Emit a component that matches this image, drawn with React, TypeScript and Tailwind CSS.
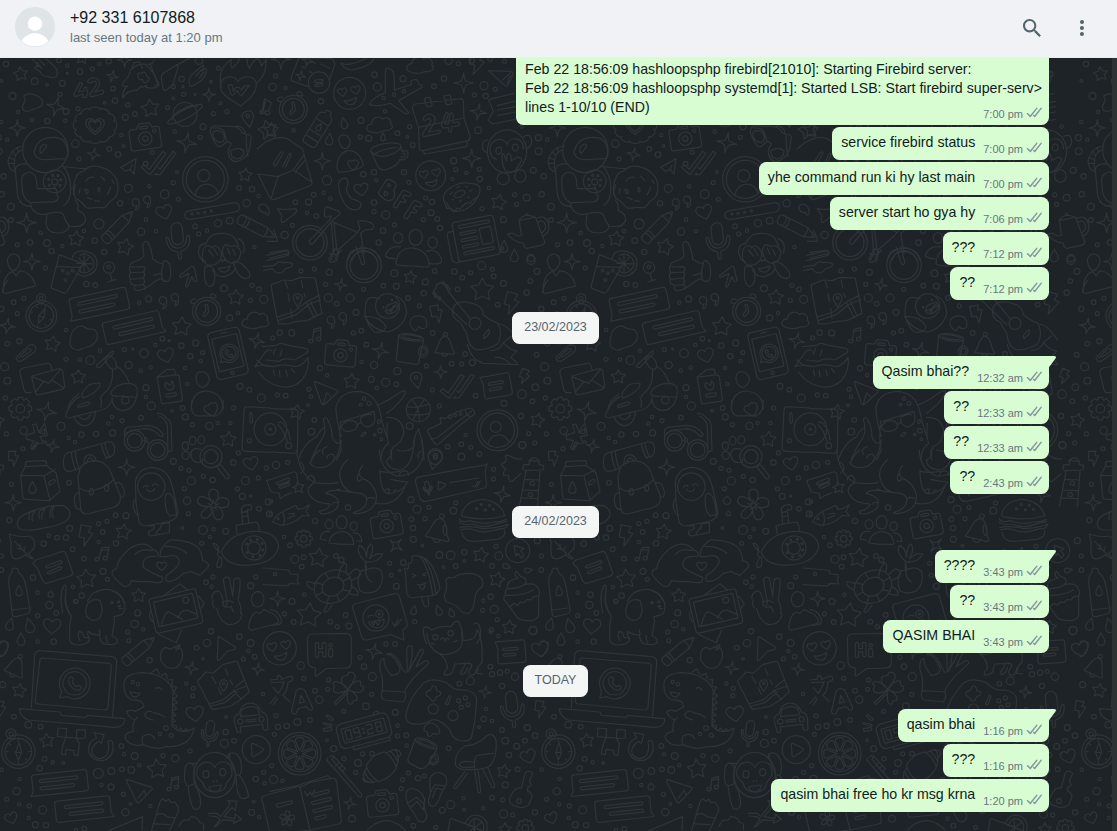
import type { ReactNode } from "react";

/* ---------- Doodle drawing helpers ---------- */

function smooth(points: string, closed: boolean): string {
  const n = points.trim().split(/[\s,]+/).map(Number);
  const pts: [number, number][] = [];
  for (let i = 0; i + 1 < n.length; i += 2) pts.push([n[i], n[i + 1]]);
  const len = pts.length;
  const at = (i: number) => (closed ? pts[(i + len) % len] : pts[Math.max(0, Math.min(len - 1, i))]);
  let d = `M${pts[0][0]} ${pts[0][1]}`;
  const count = closed ? len : len - 1;
  for (let i = 0; i < count; i++) {
    const a = at(i - 1);
    const b = at(i);
    const c = at(i + 1);
    const e = at(i + 2);
    const x1 = b[0] + (c[0] - a[0]) / 6;
    const y1 = b[1] + (c[1] - a[1]) / 6;
    const x2 = c[0] - (e[0] - b[0]) / 6;
    const y2 = c[1] - (e[1] - b[1]) / 6;
    d += `C${x1.toFixed(1)} ${y1.toFixed(1)} ${x2.toFixed(1)} ${y2.toFixed(1)} ${c[0]} ${c[1]}`;
  }
  return closed ? d + "Z" : d;
}

const L = ({ d }: { d: string }) => <path d={d} />;
const Blob = ({ p }: { p: string }) => <L d={smooth(p, true)} />;
const Curve = ({ p }: { p: string }) => <L d={smooth(p, false)} />;
const O = ({ c }: { c: string }) => {
  const [x, y, r, ry] = c.split(" ").map(Number);
  return <ellipse cx={x} cy={y} rx={r} ry={ry || r} />;
};
const Box = ({ b, r = 4 }: { b: string; r?: number }) => {
  const [x, y, w, h] = b.split(" ").map(Number);
  return <rect x={x} y={y} width={w} height={h} rx={r} />;
};

const At = ({ x, y, s = 1, r = 0, children }: { x: number; y: number; s?: number; r?: number; children: ReactNode }) => (
  <g transform={`translate(${x} ${y}) rotate(${r}) scale(${s})`}>{children}</g>
);

const Dots = ({ list }: { list: string }) => (
  <>
    {list.split(",").map((t, i) => (
      <O key={i} c={t.trim()} />
    ))}
  </>
);

function starPath(x: number, y: number, r: number, rot: number) {
  let d = "";
  for (let i = 0; i < 10; i++) {
    const a = ((rot - 90 + i * 36) * Math.PI) / 180;
    const q = i % 2 ? r * 0.52 : r;
    d += `${i ? "L" : "M"}${(x + q * Math.cos(a)).toFixed(1)} ${(y + q * Math.sin(a)).toFixed(1)}`;
  }
  return d + "Z";
}
const Stars = ({ list }: { list: string }) => (
  <>
    {list.split(",").map((t, i) => {
      const [x, y, r, rot] = t.trim().split(" ").map(Number);
      return <L key={i} d={starPath(x, y, r, rot || 0)} />;
    })}
  </>
);

/* Each entry is "x y radius rotation"; `unit` is the radius at which `d` is drawn. */
const Stamp = ({ list, d, unit }: { list: string; d: string; unit: number }) => (
  <>
    {list.split(",").map((t, i) => {
      const [x, y, r, rot] = t.trim().split(" ").map(Number);
      return (
        <At key={i} x={x} y={y} s={r / unit} r={rot || 0}>
          <L d={d} />
        </At>
      );
    })}
  </>
);
const Sparks = ({ list }: { list: string }) => (
  <Stamp
    list={list}
    unit={30}
    d="M0 -30Q3 -7 7 -6Q14 -3 30 0Q12 3 7 7Q3 12 0 30Q-3 12 -7 7Q-12 3 -30 0Q-12 -3 -7 -7Q-3 -12 0 -30Z"
  />
);
const Hearts = ({ list }: { list: string }) => (
  <Stamp list={list} unit={26} d="M0 24C-16 12 -27 2 -26 -9C-24 -24 -6 -24 0 -12C6 -24 24 -24 26 -9C27 2 16 12 0 24Z" />
);
const Bolts = ({ list }: { list: string }) => (
  <Stamp list={list} unit={30} d="M-14 -28L14 -24L7 -8L20 -5L-4 32L-3 8L-18 6Z" />
);
const Drops = ({ list }: { list: string }) => (
  <Stamp list={list} unit={18} d="M0 -19C5 -8 12 0 11 8C9 20 -9 20 -11 8C-12 0 -5 -8 0 -19Z" />
);

/* ---------- Recurring doodles ---------- */

const Camera = () => (
  <>
    <L d="M-38 -26L-21 -26L-16 -37Q-14 -40 -10 -40L14 -40Q18 -40 20 -36L24 -26L38 -26Q46 -26 46 -18L46 30Q46 38 38 38L-38 38Q-46 38 -46 30L-46 -18Q-46 -26 -38 -26Z" />
    <O c="0 6 20" />
    <O c="0 6 8" />
    <O c="30 -14 5" />
    <Box b="-12 -31 24 7" r={3} />
  </>
);
const Contact = () => (
  <>
    <O c="0 0 68" />
    <O c="0 0 57" />
    <O c="-5 -11 18" />
    <L d="M-31 47C-24 5 28 5 39 41" />
  </>
);
const Mic = () => (
  <>
    <Box b="-17 -56 34 66" r={17} />
    <L d="M-35 -14Q-27 -18 -26 -6Q-22 20 0 20Q24 18 27 -8Q30 -18 36 -12Q38 24 5 31L5 50Q1 58 -4 50L-4 31Q-34 26 -35 -14Z" />
  </>
);
const Pencil = () => (
  <>
    <L d="M-56 -15L28 -15L58 -2Q62 0 58 2L28 15L-56 15Q-64 15 -64 0Q-64 -15 -56 -15Z" />
    <L d="M28 -15Q34 0 28 15M-44 -15Q-36 0 -44 15M-34 -15Q-26 0 -34 15M50 -6L50 6" />
  </>
);
const Pin = () => (
  <>
    <L d="M0 26C-12 8 -18 0 -17 -9C-14 -28 14 -28 17 -9C18 0 10 10 0 26Z" />
    <O c="0 -8 5" />
  </>
);
const Chat = ({ flip }: { flip?: boolean }) => (
  <g transform={flip ? "scale(-1 1)" : undefined}>
    <L d="M-72 -32L78 -32Q86 -32 86 -24L86 24Q86 32 78 32L-82 32Q-92 32 -84 26L-80 17L-80 -24Q-80 -32 -72 -32Z" />
    <Box b="-58 -16 116 9" r={4.5} />
    <Box b="-58 6 104 9" r={4.5} />
  </g>
);
const Note = () => (
  <>
    <L d="M-42 -32L36 -32Q42 -32 42 -26L42 24Q42 32 34 32L-32 32Q-38 32 -38 24L-36 -12Z" />
    <Box b="-22 -12 44 7" r={3.5} />
    <Box b="-22 4 36 7" r={3.5} />
  </>
);
const Ticks = () => (
  <L d="M-52 6L-44 -2L-28 12L12 -42L22 -36L-26 28Z M-6 24L-12 28L4 28L52 -36L43 -42L4 12L-2 6" />
);
const Compass = () => (
  <>
    <O c="0 0 50" />
    <O c="0 0 40" />
    <O c="-22 -53 15" />
    <O c="-22 -53 6" />
    <L d="M2 -27L10 2L0 25L-8 2ZM-8 2L10 2M0 -36L0 -31M36 0L31 0M0 36L0 31M-36 0L-31 0M-27 -24L-23 -21M25 24L22 21" />
  </>
);
const Cloud = () => (
  <L d="M-34 20C-50 14 -40 -4 -26 -3C-26 -22 0 -30 10 -16C22 -26 40 -12 33 1C48 12 30 24 14 20C0 28 -20 28 -34 20Z" />
);
const Quotes = () => (
  <>
    <L d="M-10 -4C-8 -22 -32 -24 -32 -8C-32 4 -20 6 -17 2C-18 9 -24 14 -21 18C-14 18 -9 6 -10 -4Z" />
    <L d="M26 -12C28 -30 4 -32 4 -16C4 -4 16 -2 19 -6C18 1 12 6 15 10C22 10 27 -2 26 -12Z" />
  </>
);
const Music = () => (
  <>
    <L d="M-8 16L-4 -22L20 -28L18 8M-4 -14L19 -20" />
    <O c="-14 17 7 6" />
    <O c="12 10 7 6" />
  </>
);
const Flower = () => (
  <>
    <L d="M0 -8C-20 -24 -14 -46 0 -46C16 -46 18 -24 6 -8C18 -30 42 -22 44 -10C46 8 24 10 8 2C28 8 34 32 20 40C4 46 -4 26 -1 8C-4 28 -20 44 -32 34C-42 22 -24 8 -8 2C-28 8 -50 -4 -44 -18C-36 -34 -14 -20 0 -8Z" />
    <O c="0 0 7" />
    <L d="M0 -8L0 -16M8 -2L15 -5M5 6L9 12M-5 6L-9 12M-8 -2L-15 -5" />
  </>
);
const Bell = () => (
  <>
    <L d="M-30 22C-20 12 -22 -24 -4 -28C18 -32 18 10 32 20Q32 26 26 26L-26 26Q-32 26 -30 22Z" />
    <O c="-1 -35 6" />
    <L d="M-10 26Q-6 36 4 34Q9 32 10 26" />
  </>
);
const Gear = () => (
  <>
    <L d="M-6 -34L6 -34L9 -25L18 -30L28 -20L23 -10L34 -6L34 6L24 9L28 20L20 28L10 23L6 34L-6 34L-9 24L-20 28L-28 20L-23 9L-34 6L-34 -6L-24 -10L-28 -20L-18 -30L-9 -25Z" />
    <O c="0 0 13" />
  </>
);
const People = () => (
  <>
    <O c="0 -44 16 20" />
    <O c="-38 -38 12 14" />
    <O c="36 -32 11 13" />
    <L d="M-38 18C-34 -28 38 -28 36 22Q0 24 -38 18ZM-46 10L-64 6C-62 -14 -50 -20 -36 -16M46 12L60 14C60 -6 48 -14 34 -12" />
  </>
);
const Plane = () => <L d="M-36 -28L36 -10Q42 -6 34 0L4 36Q-2 38 -6 30L-36 -22ZM0 24L16 0L22 12" />;
const Alarm = () => (
  <>
    <O c="0 0 42" />
    <O c="0 0 33" />
    <L d="M-5 -20Q0 -24 3 -18L6 2L-6 16Q-12 16 -10 8L-2 -2ZM-36 -24C-56 -20 -48 -42 -32 -36M12 -42C4 -56 30 -56 28 -40Z" />
  </>
);
const Arrow = () => <L d="M-4 32L2 -8L-20 6Q-28 8 -24 0L6 -28Q12 -34 16 -26L28 10Q26 18 18 12L12 0L2 32Q-1 36 -4 32Z" />;
const WhatsLogo = () => (
  <>
    <L d="M-40 44L-34 24A46 46 0 1 1 -18 40Z" />
    <O c="5 0 35" />
    <L d="M-10 -18Q-2 -22 2 -12L-2 -4Q4 8 12 10L18 6Q28 10 22 18C8 30 -22 0 -10 -18Z" />
  </>
);
const Citrus = () => (
  <>
    <O c="0 0 64" />
    <O c="0 0 54" />
    {[0, 45, 90, 135, 180, 225, 270, 315].map((a) => (
      <g key={a} transform={`rotate(${a})`}>
        <L d="M0 -9L-13 -38Q-14 -48 0 -48Q14 -48 13 -38Z" />
      </g>
    ))}
  </>
);
const LoveFace = () => (
  <>
    <O c="0 0 48" />
    <Hearts list="-22 -4 14 -10,18 -10 14 -10" />
    <L d="M-16 22Q4 24 20 12Q20 34 4 34Q-10 34 -16 22Z" />
  </>
);
const Monkey = () => (
  <>
    <O c="0 0 62 68" />
    <L d="M0 -22C-12 -52 -56 -38 -54 -4C-54 8 -38 20 -34 26C-30 60 34 60 34 26C40 16 54 8 52 -8C52 -44 12 -50 0 -22Z" />
    <O c="-26 -2 9 11" />
    <O c="24 -8 9 11" />
    <L d="M-18 36Q4 32 20 30Q18 50 0 50Q-12 50 -18 36ZM-5 18L-3 20M6 16L5 20" />
  </>
);

/* ---------- Wallpaper sections ---------- */

const SectionA = () => (
  <g transform="scale(.33333)">
    <Dots list="18 192 8,177 181 7,202 197 5,202 220 3,240 215 8,277 207 6,298 192 5,326 184 8,104 244 10,187 250 9,141 254 4,4 243 4,180 283 6,38 288 10,339 266 7,314 308 4,345 302 8,54 336 5,198 334 9,234 326 6,383 315 6,96 360 5,142 363 8,196 362 5,405 342 7,376 352 9,503 323 6,597 182 11,545 237 8,520 260 6,549 260 3,585 283 3,551 283 6,520 295 4,633 245 4,655 205 6,661 310 4,681 335 6,640 341 6,609 380 9,524 395 5,601 412 6,22 419 5,226 431 11,364 405 5,371 438 4,328 447 7,354 464 8,237 477 6,457 457 6,437 491 7,531 516 4,520 548 6,448 559 5,385 565 12,494 583 13,535 598 6,11 529 8,5 583 8,4 366 5,717 564 7,756 568 8,776 588 5" />
    <Stars list="62 222 22 -8,246 173 20 5,451 325 28 -8,803 390 30 -14,736 525 21 6" />
    <Sparks list="168 320 30 14,337 228 18 14,374 180 22,627 284 20,560 428 30 10,281 463 20 12,52 384 25" />
    <Blob p="68 318 76 300 72 288 92 282 112 288 126 300 124 318 100 328 84 334 70 330" />
    <L d="M98 178L116 200Q100 196 106 206L122 216Q124 228 144 230Q168 238 172 224Q174 210 162 198L138 176M118 178L134 196M110 186L126 206" />
    <L d="M222 282L240 248L248 250L236 276L250 273L253 262L261 262L260 271L264 278L258 292L248 292L249 282L226 290ZM262 246Q268 232 284 234Q302 238 298 256Q292 270 284 276L308 270Q314 274 308 282L276 290Q266 290 272 280L288 256Q292 242 282 244Q274 244 270 250Z" />
    <L d="M368 294Q368 270 382 258Q362 262 370 248Q388 230 392 210Q410 192 432 192Q464 210 474 258Q464 268 438 262L440 256L426 262Q424 254 414 268Q402 274 396 272Q380 276 368 294ZM396 204L402 188L418 186L428 206M438 192Q456 196 462 182M414 230Q410 216 424 220Q438 210 440 228Q456 236 440 246Q430 252 428 238Q418 244 414 230ZM466 256L478 254L462 222L452 196M484 236Q484 222 492 218L530 194L534 202L518 256L496 272Q488 270 488 258ZM530 196L572 172" />
    <L d="M568 252Q564 232 582 218L608 196Q614 196 610 204L602 214L616 206Q622 208 618 218Q616 232 600 244L578 258Q570 262 568 252ZM588 228L602 212M598 234L612 216" />
    <L d="M664 262Q650 208 694 178Q690 196 696 204Q716 190 718 174M722 318C690 298 654 280 662 250C672 222 708 228 714 246C722 228 760 222 768 248C774 278 744 300 722 318ZM770 250Q792 230 796 206L799 178L784 198Q782 184 774 176Q762 176 748 206Q742 194 740 176M684 256L692 280Q698 292 704 280L712 272L718 282Q724 292 730 280L748 256L734 258L724 270L718 262L708 262L700 274L696 254Z" />
    <g transform="translate(285 376)">
      {[0, 30, 60, 90, 120, 150, 180, 210, 240, 270, 300, 330].map((a) => (
        <g key={a} transform={`scale(1.2 1) rotate(${a})`}>
          <L d="M-13 -47C-12 -57 12 -57 13 -47" />
        </g>
      ))}
      <Hearts list="0 2 28,0 2 19" />
    </g>
    <At x={435} y={410} r={-8}><Camera /></At>
    <At x={555} y={343}><O c="0 0 36" /><g transform="rotate(-28)"><O c="0 0 58 13" /><Curve p="-42 -4 -30 -14 0 -17 30 -14 44 -2" /></g></At>
    <L d="M636 382Q626 392 636 410Q650 444 662 440L682 424Q692 428 694 432L686 446Q682 458 690 474Q704 492 722 480Q744 470 750 440L754 412Q750 398 738 406L740 444L744 470M636 382Q640 374 654 378L702 380Q722 384 726 398L736 402Q732 378 708 378M640 384Q670 382 674 400L680 420M640 396Q650 388 666 396Q678 410 670 424Q656 432 644 418Q636 406 640 396ZM692 452Q704 444 720 446L732 452Q732 470 716 476Q700 478 694 466Z" />
    <L d="M784 342L794 296L814 308L806 332M796 304L790 330" />
    <O c="786 336 6 5" /><O c="802 338 7 6" />
    <At x={745} y={356} r={-10}><Pin /></At>
    <O c="136 450 68" />
    <L d="M203 468Q206 414 164 412Q110 410 102 458Q108 484 150 478L194 476Q202 474 203 462M120 456Q116 440 134 432Q144 434 136 444Q130 454 124 460Z" />
    <L d="M72 438Q32 442 24 486Q26 510 46 516L42 496M64 450Q40 462 44 494M50 442L56 456M36 454L46 466M26 472L40 478M26 490L42 490" />
    <L d="M82 492Q48 490 46 508L52 580Q58 618 90 618M66 552Q60 520 88 516Q110 520 110 550L112 566Q142 566 154 566Q176 564 168 580Q184 598 160 606L92 608Q64 596 66 552ZM190 500L230 504Q256 508 266 504M186 496Q212 520 212 566Q214 598 192 616" />
    <O c="164 544 34" /><O c="164 546 9" />
    <Dots list="158 526 3,174 527 3,146 538 3,182 540 3,148 556 3,180 556 3,164 564 3" />
    <Blob p="222 550 234 522 252 512 270 500 296 500 320 508 336 520 350 540 354 566 346 592 330 604 314 622 290 622 262 624 244 606 226 592 220 570" />
    <L d="M226 554L220 584M258 544Q266 528 282 532M302 530Q310 534 314 542M254 568Q266 564 264 580Q258 584 254 568ZM294 566Q296 558 300 568Q300 580 294 574ZM322 584Q326 578 332 562M284 602L298 604M262 592L276 598M240 566L238 580M336 540L342 550" />
    <At x={476} y={496}><Ticks /></At>
    <L d="M362 502L408 476L402 522L390 508L376 514ZM390 508L396 496" />
    <At x={616} y={538}><Contact /></At>
  </g>
);

const SectionB = () => (
  <g transform="translate(0 200) scale(.33333)">
    <Dots list="33 20 10,33 60 7,122 99 5,52 134 6,90 128 8,141 129 10,155 153 8,187 138 5,252 93 5,297 72 15,284 122 8,313 156 8,136 204 6,259 252 8,286 255 7,41 307 7,72 295 6,4 327 8,52 341 6,22 431 7,58 424 8,198 390 5,418 308 5,446 297 9,438 59 5,423 95 11,468 94 5,585 79 7,596 102 6,621 92 5,654 70 11,689 62 10,740 10 11,763 141 5,756 256 6,777 268 7,672 265 10,751 301 6,791 298 12,689 354 9,714 340 5,487 416 7,508 422 3,466 435 5,544 437 8,587 429 9,571 469 8,608 458 6,602 483 5,432 460 13,373 449 6,398 447 3,300 452 5,271 481 13,240 479 5,198 478 6,14 500 12,386 495 11,452 503 5,422 512 5,555 504 5,562 552 5,438 563 9,438 591 5,720 559 9,748 569 7,784 594 12,22 542 10,16 594 6,360 10 8" />
    <Stars list="228 117 24 6,375 141 26 14,707 292 24 4,545 380 30 4,157 432 24 10,235 531 22" />
    <Sparks list="80 68 30,22 378 24 8,770 422 24 14" />
    <Hearts list="493 36 24 -16,498 466 24 -16" />
    <L d="M92 10Q92 38 126 44Q142 42 158 38Q188 34 192 48Q196 66 206 74Q210 98 172 99Q140 98 138 70L140 46M206 78Q250 86 257 60Q256 38 234 32Q236 10 226 0M62 6Q72 20 92 20" />
    <At x={356} y={78} r={-46} s={1}><Pencil /></At>
    <At x={427} y={14} s={0.95}><Quotes /></At>
    <L d="M570 32L704 8Q718 8 718 22Q718 34 706 36L572 58Q554 58 554 46Q554 34 570 32Z" />
    <Dots list="576 42 3,594 40 3,614 37 3,634 33 3" />
    <At x={534} y={124} r={-6}><Mic /></At>
    <At x={772} y={84} r={27}><Pencil /></At>
    <L d="M776 22Q780 8 796 14Q812 24 806 44Q794 48 798 38Q778 38 776 22Z" />
    <At x={664} y={166}>
      <Curve p="-48 -34 -28 -60 4 -66 36 -56 52 -28" />
      <L d="M-48 -36Q-70 -34 -68 -6Q-60 20 -48 18M50 -50Q76 -40 66 -6M-56 10Q-60 -22 -44 -28Q-34 -32 -28 -22Q-20 -34 -10 -24L0 -10Q4 18 -20 28Q-48 36 -56 10ZM4 -8Q2 -26 14 -32Q28 -26 34 -28Q50 -32 58 -12Q58 20 32 24Q8 20 4 -8ZM-48 34Q-24 28 -20 50Q-16 92 -36 94Q-54 86 -50 40ZM36 20Q56 12 82 48Q92 68 74 70Q48 68 36 20M-8 38Q6 40 26 32Q22 52 8 50Q-6 50 -8 38ZM-28 44Q-14 66 8 64Q34 58 40 42M-38 -16L-24 2M-22 -20L-10 0M18 -22L26 -2M34 -18L42 0" />
      <Dots list="2 16 2,10 14 2" />
    </At>
    <Sparks list="96 185 25" />
    <L d="M22 180Q26 162 42 162Q60 164 60 186Q54 206 42 212Q24 208 22 180ZM10 276Q8 224 38 214L48 228L60 212Q94 216 106 254Q106 260 98 260L18 280Q12 280 10 276ZM178 164L250 192L200 276Q196 282 188 278L158 266Q152 264 154 256ZM172 200L242 202" />
    <Dots list="188 212 4,204 220 4,218 212 4,196 240 4" />
    <Curve p="216 176 224 160 244 153 270 158 288 174 288 206 270 224 248 228 228 220" />
    <Curve p="240 166 256 162 278 178 280 200 264 216 246 218 236 208" />
    <L d="M252 166L252 216M230 190L280 192M236 174L268 208M268 172L238 204" />
    <O c="327 203 17" /><O c="326 201 5" /><L d="M330 220L336 242L324 246M336 242L348 238" />
    <L d="M392 218Q384 196 396 188Q426 178 432 168L428 136Q432 118 444 128Q456 150 458 178Q474 190 490 192Q488 184 496 182Q512 186 512 216Q512 242 502 244Q490 246 486 236Q466 240 458 250Q434 270 412 272Q396 268 406 256Q386 254 392 238Q384 226 392 218ZM490 192Q482 212 486 236M394 200Q404 202 430 200Q440 204 430 216L392 218M392 238L430 234Q438 224 430 216M406 256L428 254Q438 246 430 234M428 254Q440 258 434 268M460 226Q472 222 486 220" />
    <At x={564} y={228} r={6}><Arrow /></At>
    <At x={124} y={348} s={0.92} r={22}><Compass /></At>
    <At x={295} y={312} r={-12} s={1.05}><Chat /></At>
    <At x={401} y={382} r={-13} s={1.05}><Chat flip /></At>
    <Blob p="212 410 222 388 244 378 262 386 284 390 292 412 278 434 252 444 232 450 212 438" />
    <At x={510} y={308} r={-2}><Quotes /></At>
    <At x={620} y={334}><Alarm /></At>
    <At x={768} y={360} s={1}><Cloud /></At>
    <L d="M48 472L86 436Q98 430 106 440Q110 450 100 458L66 482Q50 490 48 472ZM56 474L84 446Q94 444 94 452L66 472" />
    <L d="M94 578L82 578Q74 578 72 570L60 520Q58 508 70 504L140 490Q150 488 152 496L156 508M96 528L178 506Q186 506 188 514L194 558Q194 566 186 568L118 584Q108 586 106 576L96 536ZM96 530L146 550L182 508M106 576L130 546M192 564L156 540" />
    <L d="M290 496L336 454Q342 452 340 460L300 502Q290 506 290 496ZM316 478Q320 464 336 470Q354 488 348 506Q328 514 316 478ZM338 510Q340 560 310 582L304 590M352 500Q376 514 388 550Q414 552 412 576L410 592Q382 590 366 588Q332 592 332 578Q346 550 388 550M300 550Q302 572 250 594Q236 584 268 554Q284 548 300 550ZM236 582Q206 602 204 628M300 592Q308 606 302 622M246 620Q230 626 234 616L262 606Q274 606 266 614ZM336 592Q336 626 366 632Q398 632 408 596" />
    <O c="376 601 11" />
    <At x={510} y={562} r={-8}>
      <L d="M-34 -36L-32 40Q-32 46 -26 46L24 46Q32 46 32 38L32 -26Q32 -34 24 -34L-34 -36L-2 -54L20 -52L22 -34" />
      <L d="M-10 -16C-20 -8 -10 8 0 8C14 8 16 -14 6 -18C8 -8 2 -4 -2 -10Z" />
      <Box b="-16 18 32 10" r={5} />
    </At>
    <At x={684} y={460} r={-13}>
      <Box b="-48 -72 96 144" r={12} /><Box b="-38 -52 76 100" r={2} /><O c="0 60 5" /><L d="M-8 -63L10 -63" />
      <g transform="scale(.6) rotate(10)"><WhatsLogo /></g>
    </At>
    <Blob p="588 538 592 520 608 515 624 526 628 542 614 560 598 558" />
    <L d="M574 628Q574 576 620 573Q668 578 670 628" />
    <L d="M765 500L796 456Q804 446 816 452M765 500Q788 492 808 498" />
  </g>
);

const SectionC = () => (
  <g transform="translate(0 400) scale(.33333)">
    <Dots list="454 18 12,183 79 12,71 92 11,19 102 6,206 114 5,225 126 5,244 104 8,288 102 8,338 99 9,325 71 5,336 51 5,366 62 6,423 53 7,516 32 4,548 24 7,556 51 9,577 74 6,628 78 11,653 69 5,691 69 5,701 24 6,69 146 6,207 248 7,34 253 6,520 184 9,543 205 6,567 211 6,574 243 12,553 266 6,561 302 11,565 341 6,547 384 4,610 229 6,638 240 8,700 188 8,715 159 6,736 242 12,775 234 6,712 267 6,727 289 9,752 288 3,777 326 7,808 342 9,799 204 6,805 306 9,28 361 8,209 385 9,146 407 5,171 413 7,198 413 8,131 431 8,218 448 7,252 476 7,296 371 6,321 364 6,347 346 7,378 347 9,308 396 7,296 426 5,348 430 8,309 514 9,322 538 6,99 533 8,113 578 5,152 584 8,219 561 5,245 587 8,227 604 6,609 390 13,641 388 5,677 394 9,630 411 5,605 430 6,618 547 7,639 531 6,635 560 5,752 557 9,767 531 6,4 468 6,4 510 7" />
    <Stars list="685 118 24 4,370 396 24 8,259 537 30 -5,416 587 22" />
    <Sparks list="140 34 30 12,158 138 20 12,380 202 25,40 308 25" />
    <Hearts list="753 190 22 -12,485 498 15" />
    <Bolts list="40 174 24 -10,257 405 32 2" />
    <At x={61} y={26}><Gear /></At>
    <L d="M78 106L104 98L98 74L108 72L116 96L134 70L142 106L120 110L128 124Q140 120 140 128L112 132L102 148Q92 150 92 142L100 122L80 118ZM118 98L134 86L134 102ZM98 144L106 126L114 128Z" />
    <L d="M200 36Q220 -4 240 -10M200 36Q190 52 206 54L286 34Q330 28 334 0M222 52Q240 86 266 74Q286 62 286 36M238 50Q256 70 272 44" />
    <L d="M76 192Q76 184 84 184L134 182Q140 182 140 188L138 196L78 200ZM76 198L62 226L68 292Q70 298 78 298L148 302L180 274L168 218L138 196M62 226L132 228L150 302M132 228L166 208M146 248Q156 236 166 240Q168 246 148 256Z" />
    <Drops list="97 263 18" />
    <L d="M206 158L322 126Q342 122 344 146Q344 166 332 170L322 172M210 214Q190 216 190 186Q190 162 206 158M210 214L242 204M214 156Q216 186 228 210M226 154Q228 184 238 206M304 132Q310 160 320 176M314 130Q320 156 330 172M238 216Q240 188 282 182Q320 184 332 216L362 290Q362 318 334 324L262 342Q242 342 242 324L234 230ZM234 258Q250 280 284 270Q326 260 342 236M252 194Q250 164 270 164Q288 168 288 184M260 190Q262 174 272 174Q280 178 280 186M236 278Q220 282 224 308Q226 330 244 328M346 250Q356 244 366 254Q378 280 370 290Q364 294 360 290" />
    <O c="274 275 6 10" /><O c="320 264 6 10" />
    <O c="404 122 31" /><O c="404 122 22" /><O c="473 150 31" /><O c="473 150 22" />
    <L d="M374 108Q370 86 382 82L440 76Q474 78 490 104Q488 112 480 108Q462 88 440 86L398 90L378 100M434 112Q444 112 442 126M430 122Q444 122 446 134M472 42Q482 36 500 54Q518 64 514 100L516 152L504 156M478 48Q500 58 502 78L504 140" />
    <L d="M408 308L406 246Q414 204 456 202Q502 206 514 250Q524 284 534 338Q530 362 500 366L436 378Q418 376 416 360ZM406 298Q396 304 402 328Q408 346 416 346M500 334Q490 290 502 280Q516 278 524 306L530 344L510 348ZM448 378L462 378Q466 388 446 394Q444 406 454 408L508 398L508 368L484 372Q486 384 474 390L468 402M430 262Q438 252 444 260M458 256Q466 246 474 256M440 268Q454 282 464 266" />
    <O c="454 260 41" />
    <O c="556 138 9 12" /><O c="578 122 10 13" /><O c="604 120 10 12" /><O c="557 166 11 12" />
    <L d="M602 148Q574 140 572 164Q576 186 594 188Q610 188 608 176M650 200Q654 194 664 196L688 228Q688 238 678 236Z" />
    <O c="633 170 33" /><O c="633 170 21" />
    <L d="M576 0Q568 46 596 48L648 48Q670 40 670 0M612 30Q612 14 624 18Q632 4 648 10Q660 26 640 48Q624 44 612 30Z" />
    <At x={640} y={316} s={1.05}><Flower /></At>
    <L d="M52 376Q50 352 80 340Q130 316 190 316Q216 330 208 350Q200 372 140 382Q60 402 52 376ZM88 360Q84 336 96 334L104 334Q92 350 98 362M118 356Q114 330 126 328L136 326Q122 344 126 358M150 352Q148 322 162 320Q152 340 160 352" />
    <L d="M28 402Q68 414 88 408Q112 420 100 448L84 462L100 476L92 476L76 464Q46 486 36 470Q30 452 34 430ZM44 424L80 462M52 446L66 448M60 432L60 446M76 440L72 454" />
    <L d="M98 490L108 480L188 454Q196 454 198 462L218 518Q218 526 210 528L140 550Q132 550 128 542L112 504ZM138 498L180 482Q190 484 184 490L144 504Q134 504 138 498ZM144 516L180 500Q190 502 182 508L148 522Q140 522 144 516Z" />
    <At x={306} y={464} r={8} s={0.9}><Music /></At>
    <L d="M350 506Q354 478 378 456Q410 424 444 436L474 458L474 468L452 470Q424 474 430 502Q450 518 488 532Q490 550 470 548L440 544Q416 546 394 542Q390 560 374 560Q352 548 336 522Q336 508 350 506ZM406 464Q420 444 458 452M480 470Q478 442 510 420Q560 418 592 440Q606 456 608 482Q630 486 624 502L600 526L584 520Q580 520 576 514L550 520Q530 542 508 544Q492 546 500 526Q538 500 538 482Q530 460 500 470ZM496 440Q530 436 560 460" />
    <L d="M664 456Q688 400 760 394Q830 392 836 440Q826 486 760 494Q682 504 664 456ZM712 402L708 380Q710 374 720 374L770 366Q776 370 778 390M728 372L724 326Q728 314 750 314Q760 320 752 330L742 330L746 368M724 338L742 334M726 350L744 348M658 456Q636 434 640 430Q656 430 656 454Q646 470 664 472M658 474Q646 494 652 502Q670 506 664 474" />
    <O c="762 444 36" /><O c="762 444 19" />
    <Dots list="740 432 3,752 420 3,772 418 3,786 430 3,788 450 3,780 466 3,758 470 3,742 458 3" />
    <L d="M740 20L810 24M740 20Q732 22 732 32L726 146Q728 154 738 154L810 157" />
    <O c="811 88 49" /><O c="811 88 17" /><O c="811 88 3" /><O c="748 122 6" /><L d="M749 40Q754 34 756 44L758 64Q754 74 750 66Z" />
    <L d="M36 518L36 510Q40 502 52 506L56 518Q74 530 78 560L90 626Q92 640 80 642L48 650Q36 650 36 638L26 546Q26 524 36 518M38 630L84 624" />
    <Drops list="57 572 16 -5" />
    <L d="M188 638Q176 584 192 556Q200 554 198 566L196 592Q198 620 208 640" />
    <L d="M636 596Q634 580 648 574Q660 572 664 584Q672 602 668 616Q680 624 682 606L670 540Q676 526 688 534L698 588L702 540Q710 530 720 538Q722 560 714 600Q726 620 722 640M640 600Q634 616 644 624" />
    <O c="773 598 19 23" />
  </g>
);

const SectionD = () => (
  <g transform="translate(0 600) scale(.33333)">
    <Dots list="169 39 7,148 15 11,113 47 6,113 125 5,161 125 8,413 39 9,404 72 11,383 96 6,430 88 5,386 122 6,449 181 8,609 176 4,590 143 7,621 129 11,633 94 8,718 110 8,752 129 10,745 153 5,764 170 7,730 177 6,559 251 5,580 265 6,578 287 6,789 282 5,678 351 4,8 254 9,42 350 7,85 374 10,122 380 7,134 477 7,158 487 5,190 489 4,119 505 8,364 438 7,372 463 5,404 468 10,418 496 5,295 520 15,334 513 10,366 508 7,394 510 10,489 467 6,526 475 11,570 453 6,5 509 5,59 537 5,50 574 11,20 598 6,58 613 5,88 618 6,128 630 12,86 654 5,106 674 9,138 676 8,304 555 5,333 561 9,370 583 6,391 612 4,451 618 5,376 637 11,498 384 7,480 402 5,514 406 6,673 430 12,702 422 7,677 396 8,791 517 6,767 537 8,794 550 5,761 605 4,755 637 9,777 652 5,253 686 7,228 690 5" />
    <Stars list="58 272 22 8,141 422 22 -6,471 507 30 -6" />
    <Sparks list="575 204 20 10,774 208 19 8" />
    <Hearts list="156 78 26 4,585 341 26 -8,34 654 19 -20" />
    <Drops list="30 73 19 14,89 77 22 -14,63 118 19" />
    <L d="M196 -10Q192 20 214 48Q206 80 210 124Q222 138 246 134Q270 130 268 114L252 112L248 98L238 94Q230 106 240 122M268 114Q260 104 264 94Q280 108 298 104Q300 122 308 130Q340 138 352 128Q352 112 336 108L344 62Q342 58 342 50L366 44Q378 30 374 12Q366 -20 340 -26M318 106Q320 128 324 128M300 104L298 90" />
    <L d="M262 12Q280 -8 300 2Q312 30 300 52Q286 68 268 56Q250 44 262 12Z" />
    <Curve p="262 4 280 -20 320 -32 352 -20 374 8" />
    <Dots list="228 4 6,336 8 3,356 6 3" /><L d="M352 20L362 16L358 26L368 26" />
    <At x={528} y={34} r={-13}>
      <Box b="-72 -54 144 106" r={8} /><Box b="-60 -42 120 76" r={2} /><L d="M-52 32Q-36 -4 -22 -4L14 28M0 20Q18 -2 34 4L58 22M-66 56L-20 92L4 58M-26 -54L30 -78L48 -54M-74 -20Q-86 0 -74 16M74 10L88 -4L76 -30" /><O c="36 -26 9" />
    </At>
    <L d="M650 26Q660 66 686 74Q720 74 726 44L722 36M676 22L694 20L700 36M668 8Q684 -4 700 8" />
    <L d="M746 80Q750 44 770 36L780 40L792 28L806 36Q830 42 836 64Q836 70 826 72L758 90Q746 92 746 80Z" />
    <At x={418} y={150} r={-40} s={0.96}><Pencil /></At>
    <L d="M482 180Q478 148 496 142L512 148Q530 132 544 148Q552 170 542 186Q532 206 518 204Q500 210 482 180ZM528 150Q526 136 540 134Q538 148 528 150" />
    <L d="M658 110L704 140Q710 142 704 148L682 154L656 182Q650 182 652 174L654 116Q654 108 658 110Z" />
    <At x={48} y={200} r={24} s={0.95}><Bell /></At>
    <L d="M0 126Q12 118 24 128Q28 150 10 166L0 170" />
    <L d="M94 324L104 164Q108 150 122 152L336 170Q350 172 350 186L338 348M106 300L120 178Q122 174 128 174L328 190Q334 192 334 198L324 322Q322 330 314 330L116 312Q106 312 106 302ZM58 326L180 336L184 346L258 352L262 346L374 356Q376 370 360 380Q340 384 320 380L84 360Q60 350 58 326Z" />
    <At x={219} y={250}><WhatsLogo /></At>
    <Bolts list="0 326 26" />
    <L d="M372 260Q368 220 426 218Q500 222 520 272Q516 330 516 378L534 392Q560 400 582 384Q580 410 556 428Q530 442 500 440Q470 452 430 434Q392 442 376 416Q372 398 400 394Q396 376 404 360Q388 354 380 336Q388 326 406 334L432 320Q430 298 396 300Q372 288 372 260ZM390 276L420 280Q412 294 398 290ZM460 338Q444 326 434 344Q436 356 460 360M460 338Q478 340 496 352M428 430Q420 408 440 404Q456 400 464 416M468 266Q476 258 486 270M404 360L412 352M452 220L470 206L478 222M484 226L498 220L502 236M506 240L518 238L516 254M516 258L530 262L522 274M522 278L532 288L522 296M522 298L532 308L520 314M520 316L530 326L518 332M518 336L528 346L516 350M516 354L526 364L516 370M518 374L530 378L528 388M534 392L542 384L550 394L558 386L566 392" />
    <O c="398 246 5" /><O c="414 253 5" />
    <L d="M592 244L618 216L640 220L668 194L706 184Q712 182 714 190L748 276L720 300L692 318L664 324L640 328Q634 326 630 318ZM628 312L668 300L706 270L742 258M634 318L674 308L712 276M706 262L732 240M700 270L724 298M636 230L648 250M654 262L664 284M676 206L684 226M690 240L698 254" />
    <At x={671} y={256} s={0.7}><Pin /></At>
    <At x={752} y={355} r={-6}>
      <L d="M-44 38L-50 4Q-50 -14 -34 -16Q-24 -46 0 -46Q26 -46 34 -16Q50 -12 50 8L48 38Q40 44 34 36L34 22L-34 22L-34 38ZM-30 -8L-24 -28Q0 -42 24 -28L28 -8ZM-16 4L16 4M-16 10L16 10" />
      <O c="-32 6 8" /><O c="32 6 8" />
    </At>
    <At x={628} y={402} r={8} s={0.72}><Mic /></At>
    <O c="769 449 42" /><L d="M758 430Q774 436 790 446Q792 448 788 452L762 470Q756 472 756 464L754 434Q754 428 758 430Z" />
    <At x={55} y={455}><Compass /></At>
    <L d="M174 384L200 386L198 412L172 410ZM230 390L256 390L256 414L230 416ZM198 412L188 438L184 462L196 464L198 448L222 452L222 464L234 466L238 430L228 414L200 412Z" />
    <L d="M282 398L312 404L304 430L296 424Q270 440 276 462Q294 486 318 468Q330 450 324 426Q330 416 338 426Q346 468 310 482Q276 484 266 456Q262 424 290 414Z" />
    <At x={177} y={549} r={-6}><Chat /></At>
    <At x={252} y={627} r={-6}><Chat flip /></At>
    <At x={416} y={570} r={4} s={1.05}><Plane /></At>
    <At x={519} y={553} s={0.85}><Music /></At>
    <At x={644} y={525}><Monkey /></At>
    <L d="M582 500Q568 478 556 500Q548 550 564 558L582 552ZM564 558Q570 610 580 626Q596 634 602 614Q602 580 586 556M686 462Q710 450 722 482Q728 520 718 526L708 524Q694 490 686 470ZM718 526Q738 550 746 588Q736 600 722 594Q710 580 708 530M570 490L590 490M680 474L690 466" />
    <L d="M482 602L488 596L498 604L506 598L514 608L524 606L530 614Q538 624 534 636L508 694M480 606L454 694M470 644Q490 636 500 650L524 654M464 672L510 674" />
    <L d="M624 640L652 640L662 650L686 620L690 610L684 602L710 604L706 632L696 622L672 650L704 656L706 642L724 658L700 670L702 662L668 660L648 680M642 682L660 658L650 650L628 648" />
    <Curve p="536 680 548 662 564 660 574 650 592 656 598 666 610 672 610 690" />
    <L d="M326 692L428 650L426 690" />
  </g>
);

const SectionE = () => (
  <g transform="translate(270 50) scale(.33333)">
    <Dots list="17 78 6,47 114 5,8 111 11,314 74 8,322 111 12,399 86 9,345 184 5,492 109 7,522 86 8,536 32 11,565 41 6,605 32 8,660 27 7,703 34 6,642 107 12,613 135 6,647 138 8,676 118 6,153 154 8,71 241 5,273 211 9,271 261 6,296 265 9,382 250 7,412 261 4,419 230 6,428 285 7,624 241 10,551 332 9,557 359 6,589 369 5,547 387 5,628 358 6,629 387 8,805 263 9,806 304 10,657 414 5,636 476 6,171 391 14,131 434 7,161 428 5,181 446 5,116 456 9,76 457 7,111 489 5,139 498 7,67 526 6,44 555 11,312 367 8,319 391 5,280 373 8,402 367 8,417 397 6,312 458 8,312 485 6,347 495 12,373 525 6,339 542 8,326 578 8,467 444 6,486 456 8,483 488 9,460 509 6,502 507 7,510 534 8,790 361 9,734 434 6,770 443 10,740 463 6,700 509 9,697 595 4,783 624 11,755 230 5" />
    <Stars list="4 240 22,686 457 24 12" />
    <Sparks list="33 28 30,581 99 30,625 186 25 10,157 333 26,605 325 28,113 32 18 14,92 77 15 14" />
    <L d="M86 24L64 82Q62 92 70 94L114 110M86 24L186 26Q196 36 194 44L178 92M152 42L178 54M130 36L136 40M96 50L106 54M118 64L126 68" />
    <O c="147 98 32" /><L d="M136 90L156 88Q162 92 156 96L138 98Q130 94 136 90ZM136 104L156 100Q162 104 156 108L140 110Q132 108 136 104Z" />
    <L d="M214 40Q218 56 244 60Q300 50 312 26M214 40Q240 50 290 24" />
    <At x={239} y={130}><LoveFace /></At>
    <L d="M348 56Q364 52 372 72L374 120L424 104Q418 88 440 88L448 104Q460 104 456 112L386 152L416 188Q412 194 404 190L360 160Q320 172 298 164Q302 146 346 128L346 68Z" />
    <Dots list="341 144 5,372 134 5,402 124 5" />
    <At x={452} y={44} s={1}><Cloud /></At>
    <Bolts list="620 38 34 10" />
    <L d="M656 62L724 64Q732 66 728 76L714 106Q708 112 702 104ZM724 66L700 88M712 100L716 84L724 76" />
    <At x={70} y={178}><Alarm /></At>
    <At x={145} y={235} r={32}>
      <L d="M-22 -36Q-22 -48 -8 -50L-8 -58Q0 -66 10 -58L10 -50Q22 -46 22 -36L22 48Q22 58 12 58L-12 58Q-22 58 -22 48ZM-22 -22L22 -22M-22 16L22 16M-22 36L22 36" />
      <Drops list="0 -4 12" />
    </At>
    <Drops list="222 220 17 -12,178 268 18 6,339 261 12,733 617 19,702 590 18" />
    <Blob p="206 270 214 256 232 258 240 276 232 294 216 292" />
    <At x={330} y={223} s={0.95} r={-4}><Cloud /></At>
    <L d="M428 170Q428 164 436 162L574 146Q580 148 580 154L582 206L600 258Q602 268 594 272L458 302Q448 304 448 294L446 236L428 178ZM446 232L582 204M460 304L464 312L590 290L592 276M466 160L464 144L480 142L486 164Q486 170 472 170ZM526 154L522 138L540 134L546 158Q546 164 530 164Z" />
    <L d="M460 206Q462 194 478 192Q500 196 494 216L476 246L508 240Q514 244 508 250L462 260Q454 256 460 248L482 214Q482 204 474 206Q468 212 462 212ZM514 224L528 188Q538 186 534 196L524 222L536 220L540 190Q550 186 550 196L548 218L566 216Q570 224 564 228L546 230L544 246Q536 248 536 240L536 232L518 234Z" />
    <L d="M656 150L666 146L732 130M656 150L670 184L654 210L668 222L736 208M682 166L736 154M682 180L736 170M684 196L736 186" />
    <At x={711} y={304} s={0.95}><O c="0 0 62 68" /><L d="M0 -22C-12 -50 -56 -38 -54 -4C-50 28 -34 22 -34 26M52 -8C52 -44 12 -50 0 -22M-62 -36Q-82 -34 -76 -6L-62 8M52 -46Q76 -60 78 -30Q76 -14 60 -8M-14 8Q-20 34 -6 60Q12 72 26 60L46 30Q48 20 34 18L14 30L12 12Q4 0 0 14L-2 30L-10 8Z" /><O c="-26 -2 9 11" /><O c="26 -12 9 11" /><O c="-12 86 19 19" /><O c="42 78 18 20" /></At>
    <L d="M-38 296L-16 278L10 266Q34 260 52 266L96 296Q102 304 102 314L126 396Q128 404 118 408L20 446Q4 452 0 444L-36 372M102 314L70 360L24 380L-36 372M70 360L126 396M24 380L4 444M76 366L104 332M10 340L32 306Q40 304 38 312L18 346Q10 350 10 340ZM38 350L58 310Q64 308 62 318L46 352" />
    <L d="M202 360Q196 316 232 302Q268 300 280 344Q276 356 250 360Q230 368 206 366ZM234 338Q234 328 246 334Q258 324 266 338Q262 352 252 360Q234 352 234 338Z" />
    <L d="M302 302Q306 286 346 280Q392 276 392 288L396 304Q416 296 414 316Q408 334 390 328Q382 350 350 358Q332 364 324 350ZM302 302Q320 326 356 316Q392 304 392 288M396 312Q406 306 406 316Q402 326 392 320M316 312Q330 298 380 292" />
    <At x={482} y={377} s={0.93}><LoveFace /></At>
    <L d="M206 400Q214 380 230 386Q238 400 230 412Q226 424 244 446Q254 448 270 456Q278 468 266 476Q246 488 224 462Q204 430 206 400Z" />
    <Hearts list="274 418 21 -10" />
    <L d="M350 388Q364 388 376 398Q382 410 370 420Q378 430 370 446Q356 458 342 446L328 434Q324 426 330 420ZM354 402Q360 400 362 406Q358 412 352 408ZM344 424Q352 424 354 432Q350 440 342 434ZM398 422Q404 418 424 432Q424 440 414 438L402 436L398 444L408 452Q408 460 398 456L392 454L380 474Q370 474 370 466ZM432 452Q440 450 456 462Q458 472 448 470L436 468L430 476L440 482Q440 492 430 488L424 486L412 506Q402 508 402 498Z" />
    <Blob p="520 442 530 422 564 402 604 400 628 410 626 436 606 452 600 460 590 458 570 476 562 474 552 486 542 476 530 474 524 458" />
    <L d="M530 458Q536 476 556 484Q600 486 626 436" /><g transform="rotate(-24 569 432)"><O c="569 432 17 9" /></g>
    <L d="M548 426L540 434M560 414L568 410M586 408L592 412M598 424L606 420M592 440L598 444M568 454L576 450M546 448L552 450" />
    <L d="M22 476Q34 480 78 476Q82 482 76 490L38 518Q30 516 36 498Z" />
    <O c="120 578 52" /><O c="120 578 42" />
    <L d="M118 572L180 508L184 498Q174 498 170 502Q160 498 164 488Q160 478 170 470L208 484Q212 490 206 496L188 510L128 582Q120 586 118 572ZM186 512L192 518L256 544Q262 548 256 554L206 598M192 520L200 596M184 516L190 600L176 630M204 600L196 628M262 548L270 536L264 516Q262 512 276 512Q310 516 312 530L306 538L284 540L272 550L282 610" />
    <O c="198 606 8" />
    <Curve p="232 630 242 606 266 596 290 594 316 606 330 630" />
    <Curve p="246 630 260 608 286 602 308 612 320 630" />
    <L d="M10 540Q22 560 22 574L-8 574M0 608L50 600Q58 602 56 610L0 624" />
    <O c="384 564 14 16" /><O c="437 562 20 24" /><O c="488 578 14 17" />
    <L d="M346 618Q354 586 392 590M470 604Q500 592 514 626" />
    <At x={614} y={560} r={-11}>
      <Box b="-60 -54 126 120" r={10} /><Box b="-42 -42 94 9" r={4} /><Box b="-42 -20 50 8" r={4} /><Box b="-42 0 50 8" r={4} /><Box b="-42 20 50 8" r={4} /><Box b="-42 40 94 8" r={4} /><Box b="18 -22 34 50" r={4} /><L d="M-62 -28L-74 -28Q-80 -26 -80 -16L-80 56Q-76 70 -56 66" />
    </At>
    <At x={780} y={540} r={-12}>
      <L d="M-26 -34L24 -34L36 44Q34 52 26 52L-20 52Q-28 50 -28 40L-28 34Q-58 24 -68 -2L-54 -2Q-40 14 -28 10ZM-26 -34Q-10 -56 24 -34M-4 -46Q0 -54 4 -46M28 -30Q60 -36 58 0Q56 20 34 26M30 -18Q50 -24 48 0Q44 12 32 16" />
    </At>
  </g>
);

const SectionF = () => (
  <g transform="translate(270 250) scale(.33333)">
    <Dots list="93 63 6,133 57 6,178 67 9,167 103 6,175 144 12,200 161 7,240 144 12,258 187 9,281 118 6,340 107 7,379 109 9,373 70 10,414 144 7,448 168 6,461 130 8,466 96 9,494 63 7,553 65 8,577 83 7,602 68 6,635 47 12,667 58 6,671 79 7,700 100 9,563 118 7,783 30 13,801 64 9,781 93 7,770 128 8,683 164 7,800 314 7,8 264 6,29 248 8,65 249 9,274 242 7,250 249 6,289 284 7,275 336 5,312 345 11,304 388 9,320 414 5,347 397 12,379 403 7,382 363 11,469 348 6,488 249 7,545 341 7,575 342 6,585 312 7,607 338 9,150 355 8,171 376 5,22 435 6,47 437 7,117 418 6,123 440 5,114 466 4,133 510 7,124 545 10,487 420 6,508 468 6,419 528 10,617 437 7,702 460 9,756 433 13,796 412 10,787 454 7,753 498 8,776 551 6,794 579 6,757 586 11,587 555 5,533 590 7,574 583 7,603 592 6,574 620 10,628 612 7" />
    <Stars list="421 82 20 8,637 120 36,244 394 24 4,80 486 23 10,802 511 22 14" />
    <Sparks list="213 104 19 10,331 302 25 14,512 366 20" />
    <Bolts list="500 190 28 -20,724 158 34 8,763 378 23 14" />
    <O c="282 46 52" /><O c="282 46 42" /><L d="M258 -10L274 40Q282 50 284 36L272 -12" />
    <L d="M182 30L196 -6M184 28Q176 34 182 38L200 32L206 6M178 10L190 18M206 10L214 0" />
    <L d="M-20 50L14 46Q24 30 38 38Q52 36 66 40Q70 48 60 52L46 56Q38 72 20 68Q10 64 8 56L-20 62M-10 16L52 2Q60 8 54 16L-10 32" />
    <Blob p="378 40 390 8 420 -6 454 2 474 28 474 50 430 48 392 46" />
    <L d="M346 18Q354 26 376 26M476 40Q500 44 514 38L514 26" />
    <L d="M4 104L40 90L66 92L90 82L136 84L156 190L110 212L80 214L50 222L26 222Q16 186 4 112ZM20 202L70 186L112 154L148 136M24 212L78 194L118 162L152 150M110 158L132 202M122 156L140 194M46 94L52 114M54 130L58 154M62 176L66 206M94 92L98 112M102 130L106 142" />
    <At x={83} y={150} s={0.8}><Pin /></At>
    <L d="M286 200Q282 140 308 142L330 146M284 200Q306 240 354 246Q400 232 410 190Q408 150 380 138M286 200Q330 196 348 230Q342 252 314 246Q294 230 286 200ZM346 184L352 166L378 156Q390 166 382 178Q370 194 352 190ZM350 182L384 168M358 186L380 160M364 190L370 166" />
    <O c="353 168 36 37" /><Dots list="366 150 2,340 172 2" />
    <Blob p="420 222 426 204 446 198 466 206 470 230 456 236 446 230 438 242 428 236" />
    <At x={204} y={216} s={1} r={-4}><Quotes /></At>
    <At x={135} y={258} s={0.9}><Music /></At>
    <At x={212} y={310} r={5}><Camera /></At>
    <At x={420} y={298} r={9}>
      <L d="M-40 -36L-36 34Q-36 42 -28 42L24 42Q32 42 32 34L36 -36" /><O c="-2 -36 37 10" /><O c="-2 -37 28 6" /><O c="40 0 14 17" /><O c="40 0 8 10" />
    </At>
    <At x={525} y={286} r={4} s={0.95}><Bell /></At>
    <L d="M494 136Q486 124 498 114Q496 102 514 98Q528 104 536 126L602 208M506 142L590 224M494 136Q502 148 510 138M548 188Q546 152 590 156L620 164Q640 176 640 194Q656 208 684 220Q700 254 682 282Q654 300 620 300Q594 290 590 250L570 216Q548 206 548 188ZM640 256L656 238Q662 244 654 256L642 266ZM592 284Q604 330 640 340L744 344Q734 330 722 322L740 304Q716 298 700 278L724 258M690 222Q714 230 726 248L742 270M664 302Q690 300 700 278M676 322Q700 320 720 340" />
    <O c="615 220 18" /><Dots list="492 130 4,498 138 4,520 100 4,530 108 4,508 146 4,536 118 4" />
    <L d="M-22 290L20 286Q30 276 46 284L110 296Q118 304 108 310L74 330Q40 322 28 334L-12 330M-40 330L-20 346L10 350Q40 340 78 350Q100 346 114 322Q120 356 96 390Q70 416 32 410Q-10 402 -34 366M10 360L14 376M28 362L30 380M48 360L52 378M64 356L74 368M16 296L10 312M36 300L30 318" />
    <L d="M134 394L200 420Q208 424 200 430L162 464Q156 466 154 458L134 402ZM160 462L170 428L182 440" />
    <At x={440} y={390} s={1} r={-12}><Pin /></At>
    <At x={562} y={416} r={-2}><Ticks /></At>
    <At x={679} y={408} r={-10} s={1.05}><Note /></At>
    <O c="445 479 36" /><L d="M410 470Q440 476 476 462M412 492Q444 500 476 490M426 450Q450 470 448 514M464 448Q444 470 430 510" />
    <L d="M474 548Q468 540 480 536L514 520L510 502L524 506Q550 490 560 486L600 474Q616 478 614 492Q590 510 570 526L510 578Q502 588 494 580ZM482 568L500 564L606 482M586 482Q588 494 600 500" />
    <Dots list="540 500 5,556 496 4,572 492 4" />
    <At x={682} y={541} s={0.9}><Contact /></At>
    <L d="M214 560Q196 500 198 470Q210 424 266 424Q314 430 328 478Q336 520 350 560M322 466Q360 450 376 436Q404 416 408 426Q392 460 350 490M350 502Q396 500 402 546Q396 580 370 590Q358 610 366 630M352 520Q348 560 356 580Q336 590 332 630M212 514Q206 570 214 600L200 630M214 530Q224 512 240 512Q262 512 262 528Q262 540 238 544Q218 546 214 530ZM212 516L312 484Q318 512 310 520Q298 536 284 528Q270 520 272 502Q290 490 306 494M262 524L274 516M276 552Q280 546 288 548Q284 562 272 558ZM160 508Q166 498 172 508Q186 530 186 560Q200 590 212 574M160 508Q170 540 160 560Q140 590 124 628M164 532Q150 540 140 560Q100 580 86 628M446 536Q456 570 460 600L462 630M446 536Q430 560 432 590Q410 610 380 600" />
    <Dots list="282 446 5,272 464 4,297 460 6,327 515 5,330 542 7,314 554 4,334 568 4" />
    <L d="M0 476L74 478Q84 480 84 488L82 600Q80 610 70 610L0 606M26 518Q36 512 44 528Q56 536 60 570M24 524Q40 536 52 576" />
    <O c="56 587 9" />
    <L d="M818 128Q818 108 834 90" /><O c="496 622 21" /><O c="496 622 6" />
  </g>
);

const SectionG = () => (
  <g transform="translate(270 440) scale(.33333)">
    <Dots list="18 75 11,53 67 6,671 88 6,671 117 6,757 15 10,423 179 9,441 208 12,477 202 6,557 189 6,550 212 10,465 236 6,424 238 7,429 264 8,430 298 9,457 317 4,234 203 8,135 243 8,42 291 5,60 316 7,75 358 12,101 352 7,95 380 7,198 348 7,214 360 8,103 464 5,66 484 9,43 522 6,71 546 7,181 545 7,227 525 7,202 560 6,237 558 9,359 370 6,400 368 8,364 406 6,389 392 4,379 439 9,508 345 10,542 346 13,521 381 4,557 378 7,583 337 8,583 363 4,678 319 6,686 348 12,666 378 7,434 545 6,662 470 8,640 482 5,638 511 6,673 508 12,682 539 6,664 569 6,685 588 5,789 571 12,802 302 9,3 185 5,2 222 5" />
    <Stars list="145 354 30 8,632 345 24 10,681 419 24 14,718 562 22 4,117 526 38 6" />
    <Sparks list="697 163 25 10,378 316 24 40,23 476 23" />
    <Drops list="432 511 14 14,506 511 16 -20,544 518 14 -20,709 379 12 110,775 391 12 80" />
    <L d="M80 30Q86 100 134 128Q180 134 204 128M118 66Q130 90 170 80Q206 60 214 0M150 30Q124 50 122 72M234 58Q200 88 212 120Q220 150 250 158Q296 160 290 184Q286 208 250 218Q260 226 290 214Q326 196 318 160Q310 130 280 116Q256 104 278 76M134 128Q110 140 116 160Q130 190 180 192Q178 208 148 214Q150 228 180 218Q210 206 204 180Q196 166 168 160Q176 148 212 152L250 158M330 90Q330 150 350 160Q386 166 414 126Q390 124 362 118M318 190Q380 200 404 140M328 30Q330 90 380 108Q440 110 460 50L456 0M362 30Q370 50 350 60Q350 86 390 90Q430 80 432 0M330 94Q360 100 390 94" />
    <L d="M90 66Q102 72 102 88L92 100M112 120Q112 108 124 106Q136 112 134 128M160 42Q150 26 172 20M170 54Q176 38 190 44Q198 54 188 64M270 100Q258 106 264 124L276 118M388 106Q392 92 406 92Q416 96 416 106M446 54Q440 42 452 34M344 152Q350 144 358 148Q360 154 352 160M370 156Q372 148 380 150M186 194Q190 184 202 188M196 152Q204 144 210 150M290 178Q300 168 314 176" />
    <L d="M-10 122L70 96Q78 94 80 102L84 128M-10 122L4 156L28 160L30 176L46 166L66 158M20 128L54 114Q64 116 56 124L26 134Q16 134 20 128ZM26 140L56 128Q64 132 56 136L32 146ZM68 142L82 136L80 128L90 134L102 134L94 146L98 158L88 152L74 158L78 146Z" />
    <L d="M8 246Q20 218 58 206L74 196Q84 198 82 208L98 206L118 194L108 214L118 228L98 226Q70 254 32 256ZM38 218Q48 236 40 256M56 222L74 220M52 236L74 226" /><O c="24 236 3" />
    <L d="M442 112L600 82Q640 78 652 72Q642 90 648 120Q652 140 644 144L470 184Q456 186 450 176L436 124Q436 116 442 112ZM506 124L526 132Q528 134 524 138L510 150Q504 150 504 144ZM540 128L626 114M608 138L614 142L624 124M620 142L630 124" />
    <At x={473} y={145} s={0.38} r={-10}><Mic /></At>
    <At x={494} y={56} r={12} s={1.25}><Pin /></At>
    <L d="M762 74L778 74L778 62Q790 46 806 60L808 74L820 76Q824 86 816 90L764 92Q754 88 762 74ZM768 94L748 200M810 94L802 200M764 118L806 120M758 150L804 152M752 174L802 176M780 134Q780 122 790 124Q796 130 792 136ZM774 168Q774 156 784 158Q790 164 786 170ZM776 62L808 64M756 56Q744 60 728 52Q708 40 706 50Q714 64 696 72Q694 82 708 86Q696 98 702 106Q718 102 716 114Q718 130 728 122L752 102" />
    <L d="M574 224Q586 180 640 178Q694 186 704 228Q640 244 578 230ZM568 236Q574 250 600 242Q640 256 670 246Q694 246 708 238M568 246Q574 256 608 252Q640 266 672 254L710 244M570 262Q600 256 640 266Q690 264 714 252Q706 270 690 266L668 272Q634 280 614 270Q590 264 570 270M576 278Q582 306 614 304L682 298Q708 290 704 272" />
    <Dots list="620 206 3,634 194 3,646 210 3,658 196 3,670 208 3" />
    <At x={349} y={252} r={-10}><Camera /></At>
    <At x={507} y={268} r={14} s={1.15}><Bell /></At><L d="M520 262Q518 254 526 256Q536 270 526 286Q518 284 520 262" />
    <At x={215} y={291}><People /></At>
    <At x={101} y={296} s={0.75}><Gear /></At>
    <L d="M-20 384L52 390Q60 392 60 402L84 404Q86 414 82 420L86 432L58 430Q58 438 50 438L-20 434" /><O c="15 402 5" />
    <L d="M286 364Q256 340 268 316Q286 322 290 352Q290 322 302 312Q316 324 298 356Q320 336 338 342Q328 364 300 366L286 366L290 390Q316 376 334 392Q344 430 320 452Q292 466 270 452Q256 420 274 392L290 390M286 366Q284 420 306 426" />
    <L d="M406 394Q398 378 412 388Q418 380 414 372Q430 370 426 348Q440 344 460 352Q494 370 510 446Q504 460 490 466L424 474Q412 470 410 456ZM460 352Q490 390 498 464M450 350Q476 380 488 464M454 470L462 496Q470 506 476 494L474 468M428 402L438 406L428 412M468 398L458 404L468 408M442 434Q456 436 468 428M450 436Q448 448 460 448Q466 442 462 432" />
    <g transform="rotate(-28 189 440)"><O c="189 440 58 48" /><O c="189 440 34 27" /><L d="M189 413L187 392M215 423L232 406M223 440L247 440M210 462L228 476M188 467L186 488M166 460L150 474M155 440L131 440M164 420L150 404M146 406L128 390Q116 396 132 420M230 405L252 392Q262 402 242 420M222 482L242 498Q254 488 240 468M150 478L130 492Q128 504 160 488M248 430L272 424Q292 440 272 450L246 450" /></g>
    <L d="M530 430Q524 418 536 412L552 414Q560 400 606 400Q648 410 636 440Q616 456 616 468Q612 510 596 520Q576 520 570 510Q562 494 530 486Q518 470 528 454Z" />
    <L d="M744 414Q728 404 740 394L752 410Q770 412 768 428L762 434Q796 426 804 444Q812 456 806 466L806 526Q804 536 786 542Q750 544 740 530L708 486Q696 476 706 466Q704 450 714 446Q708 428 726 420L744 414M762 434Q750 444 718 446M790 450Q760 468 706 466M720 500L732 490L742 496L752 486L762 488L772 478L782 480L792 470L804 468" />
    <O c="743 332 36" /><L d="M732 316L762 326L752 332L762 346L754 354L744 340L738 348Z" />
    <L d="M254 492L376 460Q384 460 388 468L412 552Q412 562 404 566L398 570L402 600L362 584L290 600Q280 602 276 594L248 504Q248 494 254 492ZM296 546L342 538Q344 560 324 564Q302 564 296 546ZM306 546L310 556L316 544L324 556L330 542M294 530Q302 522 312 528M368 548L374 560L384 538M380 556L394 538" />
    <O c="318 534 39" /><O c="328 522 11" /><O c="328 522 3" />
    <Curve p="0 508 20 516 33 536 30 552 4 556" />
    <L d="M612 552Q620 544 628 556Q640 590 620 610M470 612Q456 580 462 562Q474 558 486 570Q510 556 544 560Q550 542 566 544Q580 570 578 600" />
    <O c="496 592 8" /><O c="542 580 8" />
  </g>
);

const SectionH = () => (
  <g transform="translate(270 630) scale(.33333)">
    <Dots list="348 42 6,375 42 7,270 82 6,282 110 8,307 140 12,92 107 11,101 145 6,176 150 6,173 178 6,135 182 7,148 209 11,18 257 6,24 291 8,50 288 8,82 276 10,120 270 7,13 313 6,305 193 6,288 229 10,221 244 6,376 247 9,383 287 5,383 318 6,409 316 7,410 347 5,171 331 4,191 356 9,278 372 6,306 371 7,264 399 10,257 427 6,222 386 6,5 407 6,11 448 12,37 453 5,246 566 10,415 429 6,398 449 6,444 445 8,463 438 6,394 476 6,536 355 7,568 161 7,601 153 12,666 133 8,690 128 8,712 124 6,735 140 11,696 168 8,661 110 7,648 237 5,641 267 8,666 273 5,627 291 4,696 300 7,706 332 10,740 349 9,772 293 9,795 317 8,765 332 7,717 375 8,743 418 7,706 465 9,666 503 7,698 510 6,701 552 12,728 555 6,795 547 8,640 535 5,581 505 5,542 524 12,517 541 9,583 539 4,413 566 5,430 587 7,497 592 6,662 5 5,789 2 12" />
    <Stars list="701 424 21 12,705 598 20" />
    <Sparks list="312 64 25 12,646 186 19 8,239 520 19 12" />
    <Hearts list="811 57 25 -14,775 379 23 -20" />
    <At x={29} y={55} s={1.04}><LoveFace /></At>
    <L d="M124 12L228 10Q244 12 244 26L244 98Q242 114 226 114L168 116L140 138Q134 140 136 130L136 114Q116 112 114 98L112 26Q114 14 124 12ZM136 40Q140 34 146 40L146 56L158 56L156 40Q162 34 168 40L168 78Q162 84 158 78L158 66L146 66L146 80Q142 84 136 80ZM176 58Q182 54 188 58L188 78Q182 84 176 78Z" /><O c="182 46 5" />
    <L d="M470 10Q476 64 520 74Q576 70 578 30L574 4M510 72Q532 90 532 116Q520 128 524 134Q536 138 548 126L554 102L586 100Q602 96 606 108Q592 126 598 134Q616 140 620 116L636 96Q640 40 624 0M574 30Q620 36 620 0M586 100Q580 118 572 124L574 134Q590 130 592 112M512 28L520 22L526 34L530 24L538 28M484 40L494 42M550 36L562 32M624 116L620 130L638 132" />
    <At x={722} y={66} r={-4} s={1.05}><Note /></At>
    <L d="M0 150L22 148L24 136L34 140L34 148L62 138Q72 142 66 152L54 156Q52 186 38 196L58 214M4 158L42 156Q34 180 24 190L10 172M18 200L0 220M22 206L10 224M64 246L78 184Q88 170 104 180L128 234Q126 244 118 240L108 230L84 236L78 252Q68 254 64 246ZM88 220L92 196L104 216Z" />
    <At x={234} y={178} s={1}>
      <L d="M0 0C-22 -16 -26 -38 -10 -40Q0 -40 2 -50C20 -56 26 -38 18 -30C14 -16 8 -8 0 0ZM0 0C10 -22 28 -28 38 -24Q34 -12 46 -8C50 10 24 16 0 0ZM0 0C22 8 34 28 24 34Q16 30 12 44C-4 48 -4 26 0 0ZM0 0C-20 16 -46 14 -44 -2Q-36 -6 -46 -18C-38 -30 -16 -20 0 0ZM0 2L-42 40L-36 46L0 10" />
    </At>
    <L d="M336 182Q342 150 330 120Q328 84 342 86Q340 110 364 136Q392 134 390 114Q370 70 352 74Q346 72 362 70Q380 74 400 122Q408 130 412 124L410 60Q416 40 426 50Q430 80 416 124L450 60Q460 54 460 66L438 110L466 92Q478 92 476 100L434 140Q410 168 404 184Q412 200 400 216L344 210Q330 206 336 182ZM336 182L404 186" />
    <L d="M408 250Q420 200 462 158Q486 142 530 158Q550 184 586 180Q620 186 620 212L614 276L604 324Q592 338 566 330Q546 326 540 300Q508 262 484 270Q460 288 420 280Q404 270 408 250ZM488 168Q500 166 500 182L512 186Q514 198 500 200L494 212Q484 216 480 204L468 196Q464 184 480 182ZM526 222L538 196Q546 198 540 208L534 224Z" />
    <O c="490 237 15" /><O c="549 257 15" /><Dots list="566 212 6,586 204 6,594 224 6,574 232 6" />
    <At x={727} y={240} r={-6}><Mic /></At>
    <L d="M168 256Q176 252 190 268Q186 274 178 268ZM158 280Q164 276 186 284Q186 290 176 288ZM160 296L184 292Q188 298 182 302L162 304Z" />
    <At x={282} y={302} r={-15} s={1}>
      <Box b="-80 -38 160 76" r={18} /><Box b="-66 -22 132 44" r={4} />
      <L d="M-44 38L-44 48L68 48L68 38M40 -38L42 -46L54 -46L56 -38M-56 -14L-40 -14L-40 14L-56 14ZM-30 14L-14 14L-14 -14L-30 -14L-30 0L-14 0M10 -14L26 -14L26 0L10 0L10 14L26 14M38 -14L54 -14L54 14L38 14ZM38 0L54 0" /><O c="-2 -6 2" /><O c="-2 6 2" />
    </At>
    <At x={89} y={371}><Citrus /></At>
    <L d="M174 384Q166 388 174 394L266 500Q276 504 276 494L186 388L192 380L226 416L216 426M206 398L196 408M216 408L206 416M180 380Q186 374 192 380" />
    <At x={334} y={410} r={-38}>
      <L d="M-34 -30Q0 -46 34 -30Q46 0 34 30Q0 46 -34 30Q-46 0 -34 -30ZM-38 -24Q-62 -18 -64 0Q-62 20 -38 26M38 -24Q58 -18 66 -14Q60 14 38 26M-48 -20Q-56 0 -48 20M50 -20Q54 0 48 18M64 -12Q74 -10 70 6L56 10M-62 -8Q-74 0 -62 10" />
    </At>
    <L d="M462 302Q460 286 478 278Q508 282 510 308Q500 316 488 310Q484 322 474 318L472 306ZM436 326L414 386Q412 394 420 400L450 416Q462 418 474 404L500 358M484 382Q484 372 500 374Q510 384 502 398Q494 408 480 402Z" />
    <g transform="rotate(22 469 340)"><O c="469 340 35 11" /><O c="469 340 26 6" /></g><O c="489 389 9 10" />
    <L d="M556 400Q556 362 586 348Q620 346 650 318Q672 306 678 332Q682 380 660 408Q640 418 616 418Q556 424 556 400ZM616 384Q610 410 616 416M568 406Q570 394 590 394L614 396M616 382Q622 374 636 374L670 370M570 408Q580 416 612 410M584 426Q564 450 552 470Q552 480 560 474L592 430M614 420L624 486Q632 494 632 480L624 420M638 418L666 472Q676 476 674 466L654 414" />
    <L d="M766 428Q776 418 788 430L778 454L784 466L774 472L772 482Q786 490 786 500L776 524Q764 536 748 532L724 524Q716 516 720 502L730 484Q740 472 754 474Z" /><O c="747 513 7" />
    <L d="M0 492L70 474L86 468L90 472L120 600M0 484L78 468L170 438Q180 436 180 446L190 444Q198 446 200 456L214 572Q214 580 206 582L120 600L-4 616M90 472L124 456L180 446M20 522L66 512Q70 520 62 522L24 532Q16 528 20 522ZM124 492L176 478Q182 484 174 488L130 500M122 516L180 502Q188 506 180 512L128 524ZM128 540L184 526Q192 530 184 536L132 548ZM134 562L166 554Q172 560 164 564L138 570ZM104 484L112 498L120 486L126 496L134 480M0 492L-20 498Q-26 500 -24 508L0 610" />
    <At x={52} y={566} s={0.5}><Flower /></At>
    <At x={337} y={520} r={-6}><Camera /></At>
    <L d="M408 490Q412 474 428 476Q454 480 464 508Q460 524 466 546Q476 564 462 574Q446 580 438 560Q434 548 420 534Q406 510 408 490ZM412 520L440 502L462 522L460 540L442 514L420 534M480 446Q488 426 510 428Q534 436 530 460Q520 480 512 494Q504 524 488 530Q472 526 476 506Q484 490 480 470ZM482 486L494 464L526 468L520 480L498 474L488 502" />
    <Curve p="292 600 318 580 352 572 386 584 404 600" />
    <L d="M534 604L540 570Q542 562 550 568L584 580L640 604" />
    <Curve p="586 578 604 558 630 558 650 578 650 604" />
    <Curve p="594 588 608 568 626 568 640 582 640 604" /><L d="M612 570L614 604M596 584L640 604M636 576L600 604" />
    <At x={766} y={594} s={0.75}><Gear /></At>
  </g>
);

const Tile = () => (
  <>
    <SectionA />
    <SectionB />
    <SectionC />
    <SectionD />
    <SectionE />
    <SectionF />
    <SectionG />
    <SectionH />
  </>
);

const Wallpaper = () => (
  <svg
    className="pointer-events-none absolute inset-0 [&_*]:[vector-effect:non-scaling-stroke]"
    width="1117"
    height="831"
    viewBox="0 0 1117 831"
    fill="none"
    stroke="#2f3437"
    strokeWidth="1.25"
    strokeLinejoin="round"
    strokeLinecap="round"
    aria-hidden="true"
  >
    {[-540, 0, 540, 1080].map((x) => (
      <g key={x} transform={`translate(${x} 0)`}>
        <Tile />
      </g>
    ))}
  </svg>
);

/* ---------- Chat ---------- */

const DoubleCheck = () => (
  <svg width="16" height="11" viewBox="0 0 16 11" className="ml-[3px] shrink-0 text-[#8696a0]" aria-hidden="true">
    <path
      fill="currentColor"
      d="M11.0714 0.652832C10.991 0.585124 10.8894 0.55127 10.7667 0.55127C10.6186 0.55127 10.4916 0.610514 10.3858 0.729004L4.19688 8.36523L1.79112 6.09277C1.7488 6.04622 1.69802 6.01025 1.63877 5.98486C1.57953 5.95947 1.51817 5.94678 1.45469 5.94678C1.32351 5.94678 1.20925 5.99544 1.11192 6.09277L0.800883 6.40381C0.707784 6.49268 0.661235 6.60482 0.661235 6.74023C0.661235 6.87565 0.707784 6.98991 0.800883 7.08301L3.79698 10.0791C3.94509 10.2145 4.11224 10.2822 4.29844 10.2822C4.40424 10.2822 4.5058 10.259 4.60313 10.2124C4.70046 10.1659 4.78086 10.1003 4.84434 10.0156L11.4903 1.59863C11.5623 1.5013 11.5982 1.40186 11.5982 1.30029C11.5982 1.14372 11.5348 1.01888 11.4078 0.925781L11.0714 0.652832ZM8.6212 8.32715C8.43077 8.20866 8.2488 8.09017 8.0753 7.97168C7.99489 7.89128 7.8891 7.85107 7.75791 7.85107C7.6098 7.85107 7.4892 7.90397 7.3961 8.00977L7.10411 8.33984C7.01947 8.43717 6.97715 8.54508 6.97715 8.66357C6.97715 8.79476 7.0237 8.90902 7.1168 9.00635L8.1959 10.0791C8.33132 10.2145 8.49636 10.2822 8.69102 10.2822C8.79681 10.2822 8.89838 10.259 8.99571 10.2124C9.09304 10.1659 9.17556 10.1003 9.24327 10.0156L15.8639 1.62402C15.9358 1.53939 15.9718 1.43994 15.9718 1.32568C15.9718 1.1818 15.9125 1.05697 15.794 0.951172L15.4386 0.678223C15.3582 0.610514 15.2524 0.57666 15.1212 0.57666C14.9646 0.57666 14.8377 0.635905 14.7403 0.754395L8.6212 8.32715Z"
    />
  </svg>
);

const Meta = ({ time }: { time: string }) => (
  <span className="flex h-[15px] items-start text-[11px] leading-[15px] whitespace-nowrap text-[#667781]">
    {time}
    <DoubleCheck />
  </span>
);

const Bubble = ({ text, time, tail }: { text: string; time: string; tail?: boolean }) => (
  <div
    className={`relative flex h-[33px] items-end rounded-[7.5px] bg-[#d9fdd3] pr-[7px] pl-[9px] ${tail ? "rounded-tr-none" : ""}`}
  >
    <span className="pb-2 text-[14.2px] leading-[19px] whitespace-nowrap text-[#111b21]">{text}</span>
    <span className="ml-2 pb-[3px]">
      <Meta time={time} />
    </span>
    {tail && (
      <svg className="absolute top-0 -right-2 text-[#d9fdd3]" width="8" height="13" viewBox="0 0 8 13" aria-hidden="true">
        <path fill="currentColor" d="M5.188 0H0v11.193l6.467-8.625C7.526 1.156 6.958 0 5.188 0z" />
      </svg>
    )}
  </div>
);

const DatePill = ({ label }: { label: string }) => (
  <div className="my-3 flex justify-center">
    <div className="h-8 rounded-[7.5px] bg-[#f4f5f5] px-3 pt-[5px] text-[12.5px] leading-[21px] text-[#54656f]">{label}</div>
  </div>
);

type Message = { text: string; time: string };

const Group = ({ items, tail }: { items: Message[]; tail?: boolean }) => (
  <div className="flex flex-col items-end gap-0.5 pr-[62px]">
    {items.map((m, i) => (
      <Bubble key={i} text={m.text} time={m.time} tail={tail && i === 0} />
    ))}
  </div>
);

const firstDay: Message[] = [
  { text: "service firebird status", time: "7:00 pm" },
  { text: "yhe command run ki hy last main", time: "7:00 pm" },
  { text: "server start ho gya hy", time: "7:06 pm" },
  { text: "???", time: "7:12 pm" },
  { text: "??", time: "7:12 pm" },
];

const days: { label: string; items: Message[] }[] = [
  {
    label: "23/02/2023",
    items: [
      { text: "Qasim bhai??", time: "12:32 am" },
      { text: "??", time: "12:33 am" },
      { text: "??", time: "12:33 am" },
      { text: "??", time: "2:43 pm" },
    ],
  },
  {
    label: "24/02/2023",
    items: [
      { text: "????", time: "3:43 pm" },
      { text: "??", time: "3:43 pm" },
      { text: "QASIM BHAI", time: "3:43 pm" },
    ],
  },
  {
    label: "TODAY",
    items: [
      { text: "qasim bhai", time: "1:16 pm" },
      { text: "???", time: "1:16 pm" },
      { text: "qasim bhai free ho kr msg krna", time: "1:20 pm" },
    ],
  },
];

const Header = () => (
  <header className="relative flex h-[57px] shrink-0 items-start bg-[#f0f2f5] pr-[23px] pl-[15px]">
    <svg className="mt-[7px]" width="40" height="40" viewBox="0 0 212 212" aria-hidden="true">
      <path fill="#DFE5E7" d="M106 0a106 106 0 1 1 0 212a106 106 0 1 1 0-212z" />
      <circle cx="106" cy="89" r="38" fill="#fff" />
      <path fill="#fff" d="M34 180C52 152 78 139 106 139s54 13 72 41c-19 18-44 28-72 28s-53-10-72-28z" />
    </svg>
    <div className="ml-[15px] flex-1 pt-[7px]">
      <div className="text-[16px] leading-[21px] text-[#111b21]">+92 331 6107868</div>
      <div className="text-[13px] leading-5 text-[#667781]">last seen today at 1:20 pm</div>
    </div>
    <div className="mt-4 flex gap-[26px] text-[#54656f]">
      <svg width="24" height="24" viewBox="0 0 24 24" aria-hidden="true">
        <path
          fill="currentColor"
          d="M15.9 14.3H15l-.3-.3c1-1.1 1.6-2.7 1.6-4.3 0-3.7-3-6.7-6.7-6.7S3 6 3 9.7s3 6.7 6.7 6.7c1.6 0 3.2-.6 4.3-1.6l.3.3v.8l5.1 5.1 1.5-1.5-5-5.2zm-6.2 0c-2.6 0-4.6-2.1-4.6-4.6s2.1-4.6 4.6-4.6 4.6 2.1 4.6 4.6-2 4.6-4.6 4.6z"
        />
      </svg>
      <svg className="mt-px" width="24" height="24" viewBox="0 0 24 24" aria-hidden="true">
        <path
          fill="currentColor"
          d="M12 7a2 2 0 1 0-.001-4.001A2 2 0 0 0 12 7zm0 2a2 2 0 1 0-.001 3.999A2 2 0 0 0 12 9zm0 6a2 2 0 1 0-.001 3.999A2 2 0 0 0 12 15z"
        />
      </svg>
    </div>
  </header>
);

export default function App() {
  return (
    <div className="relative flex h-[831px] w-[1117px] flex-col overflow-hidden bg-[#1e2327] font-['Liberation_Sans',Arial,sans-serif]">
      <Wallpaper />
      <Header />
      <main className="relative flex min-h-0 flex-1">
        <div className="absolute inset-x-0 top-0 h-px bg-[#e9edef]" />
        <div className="relative w-[1111px]">
          <div className="mb-0.5 flex justify-end pr-[62px]">
            <div className="flex h-[68px] items-end rounded-b-[7.5px] bg-[#d9fdd3] pr-[7px] pl-[9px]">
              <div className="pb-2 text-[14.2px] leading-[19px] whitespace-nowrap text-[#111b21]">
                <div>Feb 22 18:56:09 hashloopsphp firebird[21010]: Starting Firebird server:</div>
                <div>Feb 22 18:56:09 hashloopsphp systemd[1]: Started LSB: Start firebird super-serv&gt;</div>
                <div className="flex h-[19px] items-start justify-between">
                  <span>lines 1-10/10 (END)</span>
                  <span className="pt-[9px]">
                    <Meta time="7:00 pm" />
                  </span>
                </div>
              </div>
            </div>
          </div>
          <Group items={firstDay} />
          {days.map((d) => (
            <section key={d.label}>
              <DatePill label={d.label} />
              <Group items={d.items} tail />
            </section>
          ))}
        </div>
        <div className="mt-px ml-px w-[5px] bg-[#2d3235]" />
      </main>
    </div>
  );
}
